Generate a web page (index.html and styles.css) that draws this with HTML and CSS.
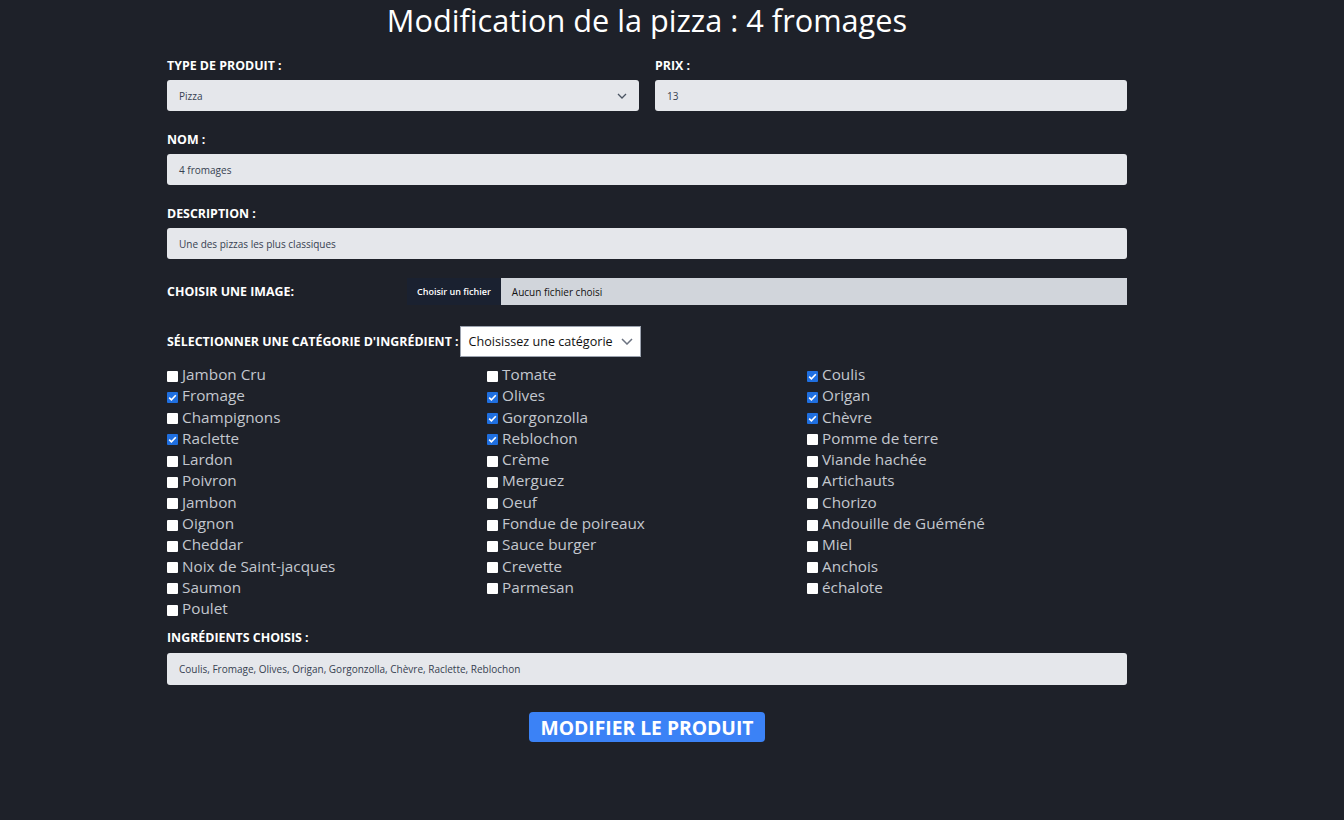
FILE: index.html
```html
<!DOCTYPE html>
<html lang="fr">
<head>
<meta charset="utf-8">
<title>Modification de la pizza</title>
<link rel="stylesheet" href="styles.css">
</head>
<body>
<main class="page">
  <h1 class="title">Modification de la pizza : 4 fromages</h1>
  <form class="form">
    <div class="row two">
      <div class="field">
        <label class="lbl">TYPE DE PRODUIT :</label>
        <div class="input select">
          <span>Pizza</span>
          <svg class="chev" width="10" height="6" viewBox="0 0 10 6"><path d="M1 1l4 4 4-4" fill="none" stroke="#4b5563" stroke-width="1.3"/></svg>
        </div>
      </div>
      <div class="field">
        <label class="lbl">PRIX :</label>
        <div class="input"><span>13</span></div>
      </div>
    </div>
    <div class="field">
      <label class="lbl">NOM :</label>
      <div class="input"><span>4 fromages</span></div>
    </div>
    <div class="field">
      <label class="lbl">DESCRIPTION :</label>
      <div class="input"><span>Une des pizzas les plus classiques</span></div>
    </div>
    <div class="file-row">
      <label class="lbl file-lbl">CHOISIR UNE IMAGE:</label>
      <div class="file">
        <span class="file-btn">Choisir un fichier</span>
        <span class="file-name">Aucun fichier choisi</span>
      </div>
    </div>
    <div class="cat-row">
      <label class="lbl">SÉLECTIONNER UNE CATÉGORIE D'INGRÉDIENT :</label>
      <div class="cat-select">
        <span>Choisissez une catégorie</span>
        <svg width="12" height="7" viewBox="0 0 12 7"><path d="M1 1l5 5 5-5" fill="none" stroke="#6b7280" stroke-width="1.5"/></svg>
      </div>
    </div>
    <div class="checks">
      <div class="chk"><span class="box"></span>Jambon Cru</div>
      <div class="chk"><span class="box"></span>Tomate</div>
      <div class="chk"><span class="box on"><svg viewBox="0 0 11 11"><path d="M2.2 5.6l2.2 2.2 4.4-4.6" fill="none" stroke="#fff" stroke-width="1.6"/></svg></span>Coulis</div>
      <div class="chk"><span class="box on"><svg viewBox="0 0 11 11"><path d="M2.2 5.6l2.2 2.2 4.4-4.6" fill="none" stroke="#fff" stroke-width="1.6"/></svg></span>Fromage</div>
      <div class="chk"><span class="box on"><svg viewBox="0 0 11 11"><path d="M2.2 5.6l2.2 2.2 4.4-4.6" fill="none" stroke="#fff" stroke-width="1.6"/></svg></span>Olives</div>
      <div class="chk"><span class="box on"><svg viewBox="0 0 11 11"><path d="M2.2 5.6l2.2 2.2 4.4-4.6" fill="none" stroke="#fff" stroke-width="1.6"/></svg></span>Origan</div>
      <div class="chk"><span class="box"></span>Champignons</div>
      <div class="chk"><span class="box on"><svg viewBox="0 0 11 11"><path d="M2.2 5.6l2.2 2.2 4.4-4.6" fill="none" stroke="#fff" stroke-width="1.6"/></svg></span>Gorgonzolla</div>
      <div class="chk"><span class="box on"><svg viewBox="0 0 11 11"><path d="M2.2 5.6l2.2 2.2 4.4-4.6" fill="none" stroke="#fff" stroke-width="1.6"/></svg></span>Chèvre</div>
      <div class="chk"><span class="box on"><svg viewBox="0 0 11 11"><path d="M2.2 5.6l2.2 2.2 4.4-4.6" fill="none" stroke="#fff" stroke-width="1.6"/></svg></span>Raclette</div>
      <div class="chk"><span class="box on"><svg viewBox="0 0 11 11"><path d="M2.2 5.6l2.2 2.2 4.4-4.6" fill="none" stroke="#fff" stroke-width="1.6"/></svg></span>Reblochon</div>
      <div class="chk"><span class="box"></span>Pomme de terre</div>
      <div class="chk"><span class="box"></span>Lardon</div>
      <div class="chk"><span class="box"></span>Crème</div>
      <div class="chk"><span class="box"></span>Viande hachée</div>
      <div class="chk"><span class="box"></span>Poivron</div>
      <div class="chk"><span class="box"></span>Merguez</div>
      <div class="chk"><span class="box"></span>Artichauts</div>
      <div class="chk"><span class="box"></span>Jambon</div>
      <div class="chk"><span class="box"></span>Oeuf</div>
      <div class="chk"><span class="box"></span>Chorizo</div>
      <div class="chk"><span class="box"></span>Oignon</div>
      <div class="chk"><span class="box"></span>Fondue de poireaux</div>
      <div class="chk"><span class="box"></span>Andouille de Guéméné</div>
      <div class="chk"><span class="box"></span>Cheddar</div>
      <div class="chk"><span class="box"></span>Sauce burger</div>
      <div class="chk"><span class="box"></span>Miel</div>
      <div class="chk"><span class="box"></span>Noix de Saint-jacques</div>
      <div class="chk"><span class="box"></span>Crevette</div>
      <div class="chk"><span class="box"></span>Anchois</div>
      <div class="chk"><span class="box"></span>Saumon</div>
      <div class="chk"><span class="box"></span>Parmesan</div>
      <div class="chk"><span class="box"></span>échalote</div>
      <div class="chk"><span class="box"></span>Poulet</div>
    </div>
    <div class="field chosen">
      <label class="lbl">INGRÉDIENTS CHOISIS :</label>
      <div class="input tall"><span>Coulis, Fromage, Olives, Origan, Gorgonzolla, Chèvre, Raclette, Reblochon</span></div>
    </div>
    <div class="actions">
      <button type="button" class="submit">MODIFIER LE PRODUIT</button>
    </div>
  </form>
</main>
</body>
</html>
```
FILE: styles.css
```css
* { box-sizing: border-box; }
html, body {
  margin: 0;
  padding: 0;
  background: #1e2129;
  height: 100%;
}
body {
  font-family: "Open Sans", "Noto Sans", "Liberation Sans", sans-serif;
  color: #fff;
}
.page {
  width: 960px;
  margin-left: 167px;
  padding-top: 2px;
}
.title {
  margin: 0;
  font-size: 30.7px;
  line-height: 36px;
  font-weight: 400;
  text-align: center;
  color: #fff;
}
.form {
  margin-top: 20px;
  display: flex;
  flex-direction: column;
}
.row.two {
  display: grid;
  grid-template-columns: 1fr 1fr;
  gap: 16px;
}
.field {
  display: flex;
  flex-direction: column;
  margin-bottom: 21px;
}
.lbl {
  display: block;
  font-size: 12.4px;
  line-height: 16px;
  font-weight: 700;
  color: #fff;
  margin-bottom: 6px;
}
.input {
  height: 31px;
  background: #e5e7eb;
  border-radius: 3px;
  display: flex;
  align-items: center;
  justify-content: space-between;
  padding: 0 12px;
  font-size: 10px;
  color: #374151;
}
.input.tall { height: 32px; }
.chev { margin-right: 0; }
.file-row {
  display: flex;
  align-items: center;
  height: 27px;
  margin-bottom: 21px;
  margin-top: -2px;
}
.file-lbl {
  width: 240px;
  margin: 0;
}
.file {
  flex: 1;
  height: 27px;
  display: flex;
  align-items: center;
  background: #d1d5db;
}
.file-btn {
  height: 27px;
  display: flex;
  align-items: center;
  padding: 0 10px;
  background: #1a2130;
  color: #fff;
  font-size: 9px;
  font-weight: 600;
}
.file-name {
  padding-left: 11px;
  font-size: 10px;
  color: #111;
}
.cat-row {
  display: flex;
  align-items: center;
  gap: 1px;
}
.cat-row .lbl { margin: 0; }
.cat-select {
  height: 31px;
  width: 181px;
  background: #fff;
  border: 1px solid #9ca3af;
  display: flex;
  align-items: center;
  justify-content: space-between;
  padding: 0 7px 0 8px;
  font-size: 12.6px;
  color: #111;
}
.checks {
  margin-top: 7px;
  display: grid;
  grid-template-columns: repeat(3, 1fr);
}
.chk {
  display: flex;
  align-items: center;
  font-size: 15.3px;
  line-height: 21.28px;
  color: #c3c7ce;
}
.box {
  width: 11px;
  height: 11px;
  background: #fff;
  margin-right: 4px;
  margin-top: 3px;
  border-radius: 1px;
  display: inline-flex;
  flex: none;
}
.box.on { background: #1f6fe0; }
.box svg { width: 11px; height: 11px; }
.chosen { margin-top: 11px; margin-bottom: 27px; }
.chosen .lbl { margin-bottom: 7px; }
.actions {
  display: flex;
  justify-content: center;
}
.submit {
  width: 236px;
  height: 30px;
  background: #3b82f6;
  border: 0;
  border-radius: 4px;
  color: #fff;
  font-family: inherit;
  font-size: 19.3px;
  font-weight: 700;
  padding: 0;
}
```
